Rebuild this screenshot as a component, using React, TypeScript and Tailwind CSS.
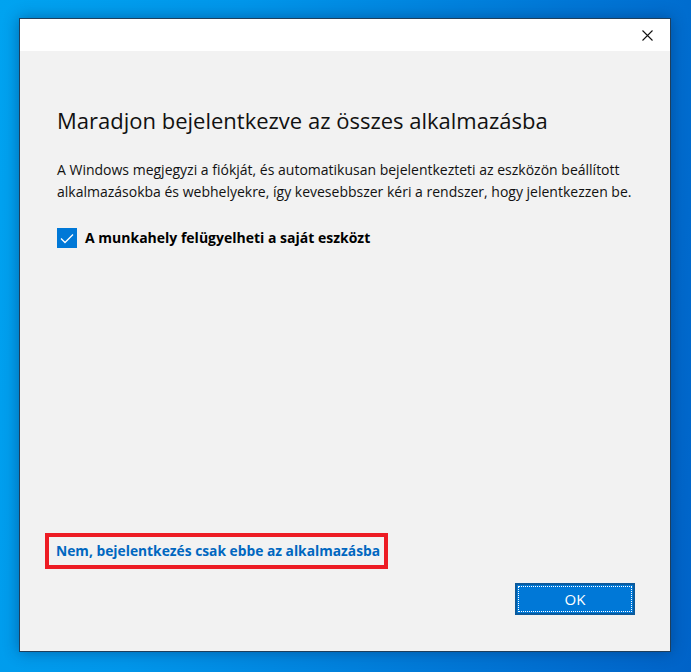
import React from "react";

export default function App() {
  return (
    <div
      className="w-[691px] h-[672px] overflow-hidden pt-[18px] pl-[19px]"
      style={{
        background:
          "linear-gradient(100deg, #00a3f0 0%, #0096ea 30%, #0077d6 70%, #0063c8 100%)",
        fontFamily: '"Open Sans", "Noto Sans", sans-serif',
      }}
    >
      <div className="w-[652px] h-[634px] border border-[#1f3f5c] bg-[#f2f2f2] flex flex-col shadow-[0_0_14px_rgba(0,40,90,0.45)]">
        <div className="h-[32px] bg-white flex items-center justify-end pr-[17px] shrink-0">
          <svg width="11" height="11" viewBox="0 0 11 11">
            <path d="M0.5 0.5 L10.5 10.5 M10.5 0.5 L0.5 10.5" stroke="#111" strokeWidth="1.1" />
          </svg>
        </div>
        <div className="flex flex-col flex-1 pl-[37px] pr-[30px]">
          <h1 className="mt-[53px] text-[22px] leading-[32px] text-[#111] font-normal whitespace-nowrap">
            Maradjon bejelentkezve az összes alkalmazásba
          </h1>
          <p className="mt-[23px] text-[14px] leading-[22px] text-[#111] whitespace-nowrap">
            A Windows megjegyzi a fiókját, és automatikusan bejelentkezteti az eszközön beállított
            <br />
            alkalmazásokba és webhelyekre, így kevesebbszer kéri a rendszer, hogy jelentkezzen be.
          </p>
          <div className="mt-[25px] flex items-center gap-[8px]">
            <div className="w-[20px] h-[20px] bg-[#0078d7] flex items-center justify-center">
              <svg width="14" height="11" viewBox="0 0 14 11">
                <path d="M1 5.5 L5 9.5 L13 1.5" fill="none" stroke="#fff" strokeWidth="1.3" />
              </svg>
            </div>
            <span className="text-[14px] leading-[20px] font-bold text-black whitespace-nowrap">
              A munkahely felügyelheti a saját eszközt
            </span>
          </div>
          <div className="flex-1" />
          <div className="ml-[-12px] w-[343px] h-[36px] border-[4px] border-[#ed1c24] flex items-center pl-[7px]">
            <span className="text-[13.8px] font-bold text-[#0067c0] whitespace-nowrap">
              Nem, bejelentkezés csak ebbe az alkalmazásba
            </span>
          </div>
          <div className="flex justify-end mt-[14px] mb-[36px] pr-[5px]">
            <button className="w-[120px] h-[32px] bg-[#0078d7] border-[2px] border-[#0b5a9c] p-[1px]">
              <div className="w-full h-full border border-dotted border-white flex items-center justify-center text-white text-[15px]">
                OK
              </div>
            </button>
          </div>
        </div>
      </div>
    </div>
  );
}
